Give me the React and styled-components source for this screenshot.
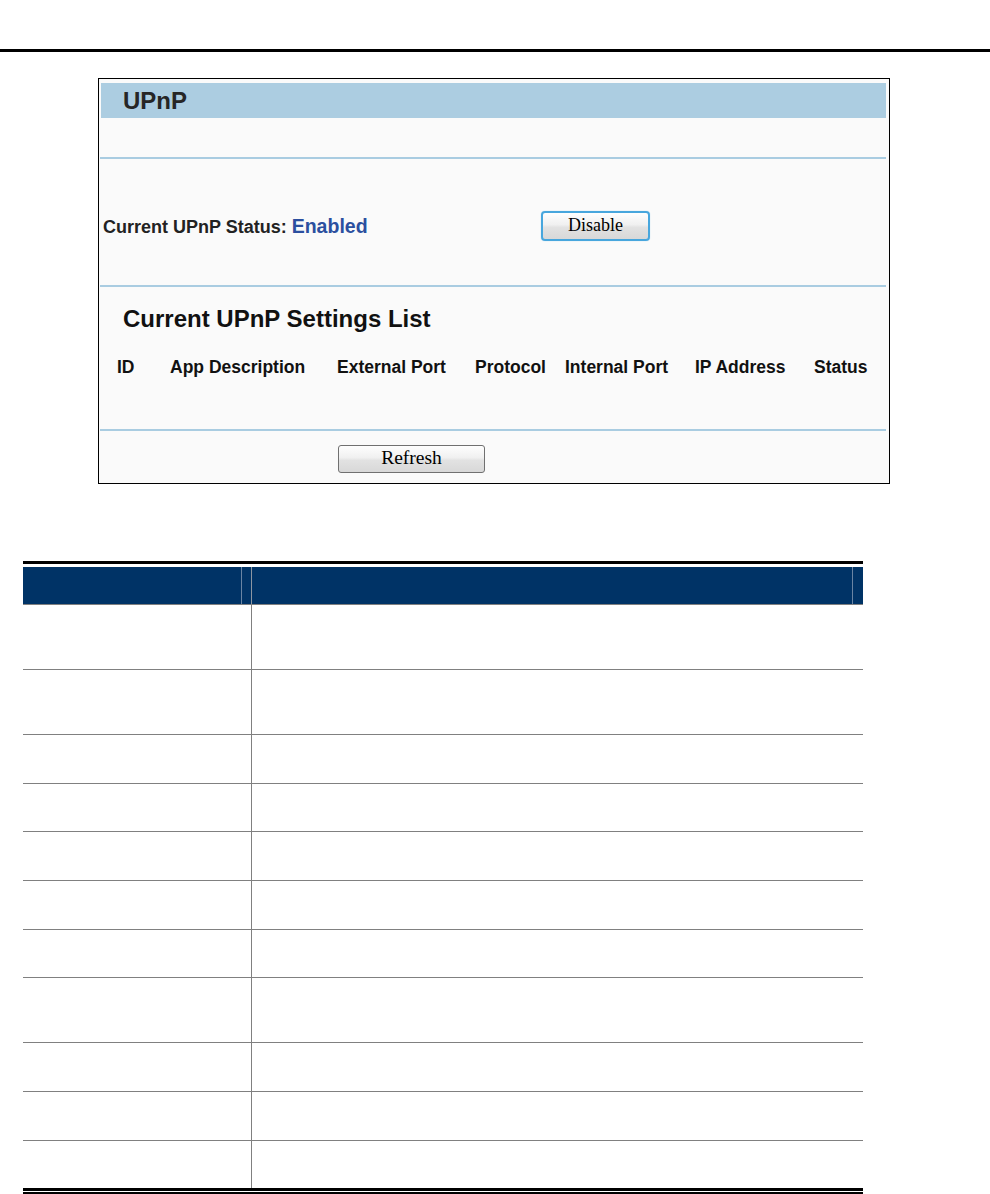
import React from 'react'
import styled, { createGlobalStyle } from 'styled-components'

const GlobalStyle = createGlobalStyle`
  html, body {
    margin: 0;
    padding: 0;
    background: #fff;
  }
  body {
    font-family: "Liberation Sans", Arial, sans-serif;
    color: #111;
  }
  * { box-sizing: border-box; }
`

const columns = [
  { label: 'ID', w: 53 },
  { label: 'App Description', w: 167 },
  { label: 'External Port', w: 138 },
  { label: 'Protocol', w: 90 },
  { label: 'Internal Port', w: 130 },
  { label: 'IP Address', w: 119 },
  { label: 'Status', w: 60 }
]

// heights between the grey rules of the description table
const rows = [65, 65, 49, 48, 49, 49, 48, 65, 49, 49]

export default function App() {
  return (
    <Page>
      <GlobalStyle />
      <TopRule />

      <Panel>
        <Band>
          <BandTitle>UPnP</BandTitle>
        </Band>
        <Blank />
        <Rule />

        <StatusRow>
          <StatusCell>
            <Label>Current UPnP Status:</Label>
            <Value>Enabled</Value>
          </StatusCell>
          <Button $focus $w={109} $h={30}>
            Disable
          </Button>
        </StatusRow>
        <Rule />

        <ListBlock>
          <ListTitle>Current UPnP Settings List</ListTitle>
          <ColumnRow>
            {columns.map(c => (
              <ColumnHead key={c.label} $w={c.w}>
                {c.label}
              </ColumnHead>
            ))}
          </ColumnRow>
        </ListBlock>
        <Rule />

        <ButtonRow>
          <Button $w={147} $h={28}>
            Refresh
          </Button>
        </ButtonRow>
      </Panel>

      <Table>
        <HeadRow>
          <HeadCell $w={219} $line="#6a84a3" />
          <HeadCell $w={10} $line="#8c96a2" />
          <HeadCell $w={601} $line="#6a84a3" />
          <HeadCell $w={9} />
        </HeadRow>
        {rows.map((h, i) => (
          <BodyRow key={i} $h={h}>
            <KeyCell />
            <DescCell />
          </BodyRow>
        ))}
        <BodyRow $h={50} $last>
          <KeyCell />
          <DescCell />
        </BodyRow>
      </Table>
    </Page>
  )
}
//---------------------------------------------------------------------
const Page = styled.div`
  width: 990px;
  height: 1194px;
  overflow: hidden;
`

const TopRule = styled.div`
  margin-top: 49px;
  height: 3px;
  background: #000;
`

const Panel = styled.div`
  margin: 26px 0 0 98px;
  width: 792px;
  height: 406px;
  border: 1px solid #000;
  background: #fafafa;
  display: flex;
  flex-direction: column;
`

const Band = styled.div`
  margin: 4px 3px 0 2px;
  height: 35px;
  background: #accde1;
  display: flex;
  align-items: center;
  padding-left: 22px;
`

const BandTitle = styled.h1`
  margin: 0;
  font-size: 24px;
  font-weight: bold;
  color: #262626;
  line-height: 1;
`

const Blank = styled.div`
  height: 39px;
`

const Rule = styled.div`
  margin: 0 3px 0 1px;
  height: 2px;
  background: #a9cce1;
`

const StatusRow = styled.div`
  height: 126px;
  padding: 8px 0 0 4px;
  display: flex;
  align-items: center;
`

const StatusCell = styled.div`
  width: 438px;
  display: flex;
  align-items: baseline;
  gap: 5px;
`

const Label = styled.span`
  font-size: 18px;
  font-weight: bold;
  color: #222;
`

const Value = styled.span`
  font-size: 19.5px;
  font-weight: bold;
  color: #2b4f9f;
`

const Button = styled.button`
  width: ${p => p.$w}px;
  height: ${p => p.$h}px;
  padding: 0 0 2px;
  font-family: "Liberation Serif", "Times New Roman", serif;
  font-size: ${p => (p.$focus ? 18 : 19.5)}px;
  color: #000;
  background: linear-gradient(#fefefe 0%, #f0f0f0 45%, #e2e2e2 55%, #d8d8d8 100%);
  border: ${p => (p.$focus ? '2px solid #47a6dd' : '1px solid #707070')};
  border-radius: ${p => (p.$focus ? 4 : 3)}px;
  box-shadow: ${p => (p.$focus ? '0 0 1px #8fc9ec' : 'none')};
`

const ListBlock = styled.div`
  height: 142px;
  padding: 18px 0 0 24px;
`

const ListTitle = styled.h2`
  margin: 0;
  font-size: 24px;
  line-height: 28px;
  font-weight: bold;
  color: #111;
`

const ColumnRow = styled.div`
  margin: 24px 0 0 -6px;
  display: flex;
`

const ColumnHead = styled.div`
  width: ${p => p.$w}px;
  flex: none;
  font-size: 17.5px;
  line-height: 20px;
  font-weight: bold;
  white-space: nowrap;
  color: #111;
`

const ButtonRow = styled.div`
  height: 52px;
  padding: 14px 0 0 239px;
`

const Table = styled.div`
  margin: 77px 0 0 23px;
  width: 840px;
  border-top: 3px solid #000;
  padding-top: 3px;
`

const HeadRow = styled.div`
  height: 38px;
  display: flex;
  background: #003366;
  border-bottom: 1px solid #808080;
`

const HeadCell = styled.div`
  width: ${p => p.$w}px;
  flex: none;
  border-right: ${p => (p.$line ? `1px solid ${p.$line}` : 'none')};
`

const BodyRow = styled.div`
  height: ${p => p.$h}px;
  display: grid;
  grid-template-columns: 229px 1fr;
  border-bottom: ${p => (p.$last ? '3px solid #000' : '1px solid #808080')};
  box-shadow: ${p => (p.$last ? '0 1px 0 #fff, 0 4px 0 #000' : 'none')};
`

const KeyCell = styled.div`
  border-right: 1px solid #808080;
`

const DescCell = styled.div``
